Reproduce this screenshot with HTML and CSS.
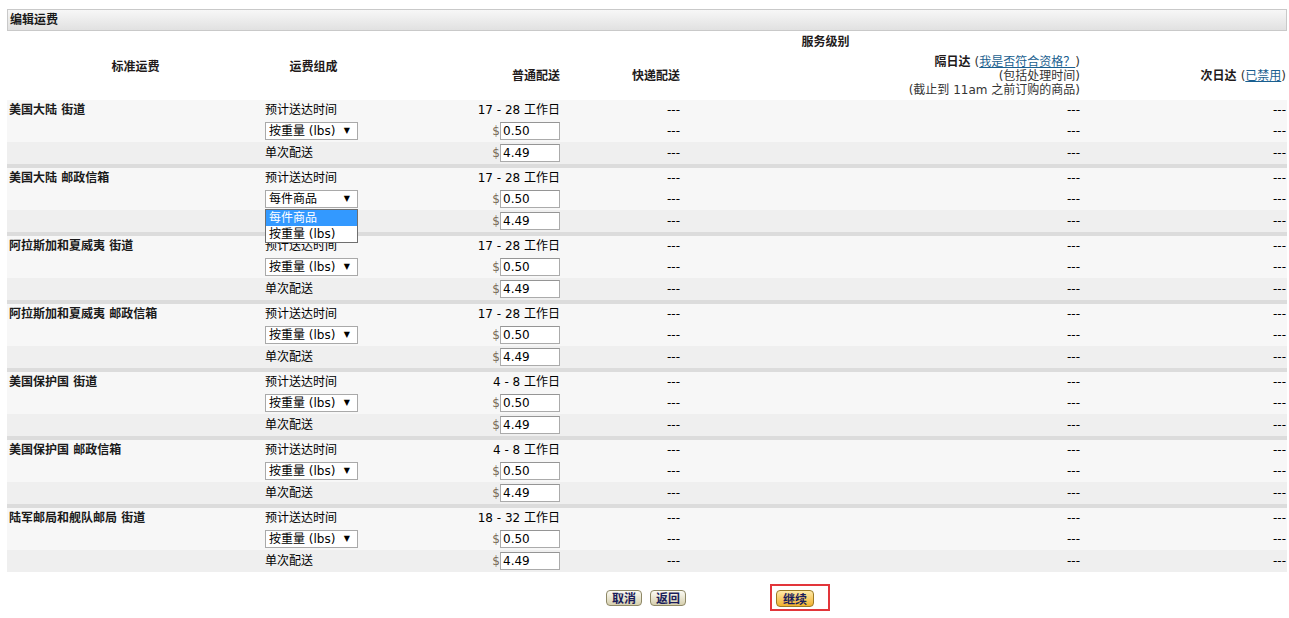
FILE: index.html
```html
<!DOCTYPE html>
<html lang="zh-CN">
  <head>
    <meta charset="UTF-8" />
    <meta name="viewport" content="width=device-width, initial-scale=1.0" />
    <title>编辑运费</title>
    <link rel="stylesheet" href="styles.css">
  </head>
  <body>
    <div class="title">编辑运费</div>

    <table class="rates">
      <colgroup>
        <col class="c-name" />
        <col class="c-part" />
        <col class="c-std" />
        <col class="c-exp" />
        <col class="c-two" />
        <col class="c-one" />
      </colgroup>
      <thead>
        <tr class="head-a">
          <th rowspan="2" class="center">标准运费</th>
          <th rowspan="2" class="center">运费组成</th>
          <th colspan="4" class="center">服务级别</th>
        </tr>
        <tr class="head-b">
          <th class="right">普通配送</th>
          <th class="right">快递配送</th>
          <th class="right">
            隔日达 <span class="note">(<a href="#">我是否符合资格？</a>)</span><br />
            <span class="note">(包括处理时间)</span><br />
            <span class="note">(截止到 11am 之前订购的商品)</span>
          </th>
          <th class="right">次日达 <span class="note">(<a href="#">已禁用</a>)</span></th>
        </tr>
      </thead>

      <tbody>
        <tr class="r1">
          <td class="region">美国大陆 街道</td>
          <td>预计送达时间</td>
          <td class="right">17 - 28 工作日</td>
          <td class="right">---</td>
          <td class="right">---</td>
          <td class="right">---</td>
        </tr>
        <tr class="r2">
          <td></td>
          <td>
            <span class="pick">
              <select>
                <option>每件商品</option>
                <option selected>按重量 (lbs)</option>
              </select>
            </span>
          </td>
          <td class="right"><span class="cur">$</span><input class="amt" type="text" value="0.50" /></td>
          <td class="right">---</td>
          <td class="right">---</td>
          <td class="right">---</td>
        </tr>
        <tr class="r3">
          <td></td>
          <td>单次配送</td>
          <td class="right"><span class="cur">$</span><input class="amt" type="text" value="4.49" /></td>
          <td class="right">---</td>
          <td class="right">---</td>
          <td class="right">---</td>
        </tr>
        <tr class="gap"><td colspan="6"></td></tr>

        <tr class="r1">
          <td class="region">美国大陆 邮政信箱</td>
          <td>预计送达时间</td>
          <td class="right">17 - 28 工作日</td>
          <td class="right">---</td>
          <td class="right">---</td>
          <td class="right">---</td>
        </tr>
        <tr class="r2">
          <td></td>
          <td>
            <span class="pick open">
              <select>
                <option selected>每件商品</option>
                <option>按重量 (lbs)</option>
              </select>
              <ul class="pick-list">
                <li class="active">每件商品</li>
                <li>按重量 (lbs)</li>
              </ul>
            </span>
          </td>
          <td class="right"><span class="cur">$</span><input class="amt" type="text" value="0.50" /></td>
          <td class="right">---</td>
          <td class="right">---</td>
          <td class="right">---</td>
        </tr>
        <tr class="r3">
          <td></td>
          <td>单次配送</td>
          <td class="right"><span class="cur">$</span><input class="amt" type="text" value="4.49" /></td>
          <td class="right">---</td>
          <td class="right">---</td>
          <td class="right">---</td>
        </tr>
        <tr class="gap"><td colspan="6"></td></tr>

        <tr class="r1">
          <td class="region">阿拉斯加和夏威夷 街道</td>
          <td>预计送达时间</td>
          <td class="right">17 - 28 工作日</td>
          <td class="right">---</td>
          <td class="right">---</td>
          <td class="right">---</td>
        </tr>
        <tr class="r2">
          <td></td>
          <td>
            <span class="pick">
              <select>
                <option>每件商品</option>
                <option selected>按重量 (lbs)</option>
              </select>
            </span>
          </td>
          <td class="right"><span class="cur">$</span><input class="amt" type="text" value="0.50" /></td>
          <td class="right">---</td>
          <td class="right">---</td>
          <td class="right">---</td>
        </tr>
        <tr class="r3">
          <td></td>
          <td>单次配送</td>
          <td class="right"><span class="cur">$</span><input class="amt" type="text" value="4.49" /></td>
          <td class="right">---</td>
          <td class="right">---</td>
          <td class="right">---</td>
        </tr>
        <tr class="gap"><td colspan="6"></td></tr>

        <tr class="r1">
          <td class="region">阿拉斯加和夏威夷 邮政信箱</td>
          <td>预计送达时间</td>
          <td class="right">17 - 28 工作日</td>
          <td class="right">---</td>
          <td class="right">---</td>
          <td class="right">---</td>
        </tr>
        <tr class="r2">
          <td></td>
          <td>
            <span class="pick">
              <select>
                <option>每件商品</option>
                <option selected>按重量 (lbs)</option>
              </select>
            </span>
          </td>
          <td class="right"><span class="cur">$</span><input class="amt" type="text" value="0.50" /></td>
          <td class="right">---</td>
          <td class="right">---</td>
          <td class="right">---</td>
        </tr>
        <tr class="r3">
          <td></td>
          <td>单次配送</td>
          <td class="right"><span class="cur">$</span><input class="amt" type="text" value="4.49" /></td>
          <td class="right">---</td>
          <td class="right">---</td>
          <td class="right">---</td>
        </tr>
        <tr class="gap"><td colspan="6"></td></tr>

        <tr class="r1">
          <td class="region">美国保护国 街道</td>
          <td>预计送达时间</td>
          <td class="right">4 - 8 工作日</td>
          <td class="right">---</td>
          <td class="right">---</td>
          <td class="right">---</td>
        </tr>
        <tr class="r2">
          <td></td>
          <td>
            <span class="pick">
              <select>
                <option>每件商品</option>
                <option selected>按重量 (lbs)</option>
              </select>
            </span>
          </td>
          <td class="right"><span class="cur">$</span><input class="amt" type="text" value="0.50" /></td>
          <td class="right">---</td>
          <td class="right">---</td>
          <td class="right">---</td>
        </tr>
        <tr class="r3">
          <td></td>
          <td>单次配送</td>
          <td class="right"><span class="cur">$</span><input class="amt" type="text" value="4.49" /></td>
          <td class="right">---</td>
          <td class="right">---</td>
          <td class="right">---</td>
        </tr>
        <tr class="gap"><td colspan="6"></td></tr>

        <tr class="r1">
          <td class="region">美国保护国 邮政信箱</td>
          <td>预计送达时间</td>
          <td class="right">4 - 8 工作日</td>
          <td class="right">---</td>
          <td class="right">---</td>
          <td class="right">---</td>
        </tr>
        <tr class="r2">
          <td></td>
          <td>
            <span class="pick">
              <select>
                <option>每件商品</option>
                <option selected>按重量 (lbs)</option>
              </select>
            </span>
          </td>
          <td class="right"><span class="cur">$</span><input class="amt" type="text" value="0.50" /></td>
          <td class="right">---</td>
          <td class="right">---</td>
          <td class="right">---</td>
        </tr>
        <tr class="r3">
          <td></td>
          <td>单次配送</td>
          <td class="right"><span class="cur">$</span><input class="amt" type="text" value="4.49" /></td>
          <td class="right">---</td>
          <td class="right">---</td>
          <td class="right">---</td>
        </tr>
        <tr class="gap"><td colspan="6"></td></tr>

        <tr class="r1">
          <td class="region">陆军邮局和舰队邮局 街道</td>
          <td>预计送达时间</td>
          <td class="right">18 - 32 工作日</td>
          <td class="right">---</td>
          <td class="right">---</td>
          <td class="right">---</td>
        </tr>
        <tr class="r2">
          <td></td>
          <td>
            <span class="pick">
              <select>
                <option>每件商品</option>
                <option selected>按重量 (lbs)</option>
              </select>
            </span>
          </td>
          <td class="right"><span class="cur">$</span><input class="amt" type="text" value="0.50" /></td>
          <td class="right">---</td>
          <td class="right">---</td>
          <td class="right">---</td>
        </tr>
        <tr class="r3">
          <td></td>
          <td>单次配送</td>
          <td class="right"><span class="cur">$</span><input class="amt" type="text" value="4.49" /></td>
          <td class="right">---</td>
          <td class="right">---</td>
          <td class="right">---</td>
        </tr>
      </tbody>
    </table>

    <div class="actions">
      <button class="btn" type="button">取消</button>
      <button class="btn" type="button">返回</button>
      <div class="highlight">
        <button class="btn btn-go" type="submit">继续</button>
      </div>
    </div>
  </body>
</html>
```

FILE: styles.css
```css
body {
  margin: 0;
  padding: 9px 2px 0 7px;
  font: 12px/14px "DejaVu Sans", "Noto Sans CJK SC", sans-serif;
  color: #000;
  background: #fff;
}

.title {
  height: 20px;
  padding-left: 2px;
  border: 1px solid #c9c9c9;
  background: linear-gradient(#f7f7f7, #e1e1e1);
  font-weight: bold;
  line-height: 20px;
  color: #1a1a1a;
}

.rates {
  width: 1280px;
  margin-top: 2px;
  border-collapse: collapse;
  table-layout: fixed;
}

.c-name { width: 256px; }
.c-part { width: 100px; }
.c-std  { width: 198px; }
.c-exp  { width: 120px; }
.c-two  { width: 400px; }
.c-one  { width: 206px; }

.rates th,
.rates td {
  padding: 0 1px 0 2px;
  vertical-align: middle;
  white-space: nowrap;
}

.rates th {
  font-weight: bold;
  color: #221a1a;
  text-align: left;
}

.head-a { height: 18px; }
.head-b { height: 49px; }

.rates .center { text-align: center; }
.rates .right { text-align: right; }

.note {
  font-weight: normal;
  color: #333;
}

.note a {
  color: #1a5f8f;
  text-decoration: underline;
}

.r1 { height: 20px; }
.r2 { height: 22px; }
.r3 { height: 22px; }

.r1 td,
.r2 td {
  background: #f7f7f7;
}

.r3 td {
  background: #efefef;
}

.gap td {
  height: 4px;
  padding: 0;
  background: #dcdcdc;
  font-size: 0;
  line-height: 0;
}

.region {
  font-weight: bold;
  color: #1a1a1a;
}

.cur {
  color: #7a6b58;
}

.amt {
  box-sizing: border-box;
  width: 60px;
  height: 18px;
  margin: 0;
  padding: 0 2px;
  border: 1px solid #ababab;
  border-top-color: #959595;
  background: #fff;
  font: 12px "DejaVu Sans", sans-serif;
  color: #000;
  vertical-align: middle;
}

.pick {
  position: relative;
  display: inline-block;
  vertical-align: middle;
}

.pick select {
  box-sizing: border-box;
  width: 93px;
  height: 18px;
  margin: 0;
  padding: 0 0 0 3px;
  border: 1px solid #a9a9a9;
  border-radius: 0;
  background: #fff;
  font: 12px "DejaVu Sans", "Noto Sans CJK SC", sans-serif;
  color: #000;
  appearance: none;
  -webkit-appearance: none;
}

.pick::after {
  content: "\25BC";
  position: absolute;
  right: 8px;
  top: 4px;
  font-size: 8px;
  line-height: 10px;
  color: #000;
  pointer-events: none;
}

.pick-list {
  position: absolute;
  left: 0;
  top: 19px;
  z-index: 2;
  box-sizing: border-box;
  width: 93px;
  margin: 0;
  padding: 0;
  list-style: none;
  border: 1px solid #6f6f6f;
  background: #fff;
}

.pick-list li {
  height: 16px;
  padding-left: 3px;
  line-height: 16px;
}

.pick-list .active {
  background: #3399ff;
  color: #fff;
}

.actions {
  display: flex;
  align-items: center;
  margin-top: 12px;
  padding-left: 599px;
}

.btn {
  box-sizing: border-box;
  width: 36px;
  height: 16px;
  margin: 0 8px 0 0;
  padding: 0;
  border: 1px solid #8e8866;
  border-radius: 4px;
  background: linear-gradient(#fcfbf4, #d6cfae);
  font: bold 12px/14px "Noto Sans CJK SC", sans-serif;
  color: #1b1d5b;
  cursor: pointer;
}

.btn:nth-child(2) {
  margin-right: 84px;
}

.highlight {
  padding: 4px 14px 2px 4px;
  border: 2px solid #e2353a;
}

.btn-go {
  width: 38px;
  height: 17px;
  margin: 0;
  border-color: #9c7a25;
  background: linear-gradient(#ffeaa8, #f0b12e);
}
```
